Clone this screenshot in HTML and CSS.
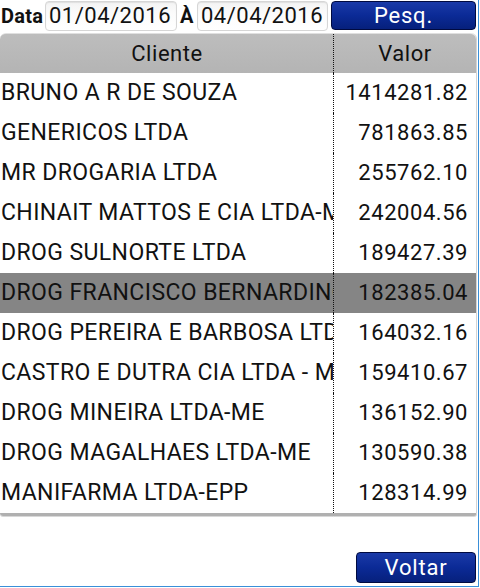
FILE: index.html
```html
<!DOCTYPE html>
<html>
<head>
<meta charset="utf-8">
<link rel="stylesheet" href="styles.css">
</head>
<body>
<div class="screen">
  <div class="toolbar">
    <span class="lbl">Data</span>
    <span class="field f1">01/04/2016</span>
    <span class="lbl a">À</span>
    <span class="field f2">04/04/2016</span>
    <button class="btn pesq">Pesq.</button>
  </div>
  <div class="table">
    <div class="row head">
      <div class="c1">Cliente</div>
      <div class="c2">Valor</div>
    </div>
    <div class="row"><div class="c1">BRUNO A R DE SOUZA</div><div class="c2">1414281.82</div></div>
    <div class="row"><div class="c1">GENERICOS LTDA</div><div class="c2">781863.85</div></div>
    <div class="row"><div class="c1">MR DROGARIA LTDA</div><div class="c2">255762.10</div></div>
    <div class="row"><div class="c1">CHINAIT MATTOS E CIA LTDA-ME</div><div class="c2">242004.56</div></div>
    <div class="row"><div class="c1">DROG SULNORTE LTDA</div><div class="c2">189427.39</div></div>
    <div class="row sel"><div class="c1">DROG FRANCISCO BERNARDINO</div><div class="c2">182385.04</div></div>
    <div class="row"><div class="c1">DROG PEREIRA E BARBOSA LTDA</div><div class="c2">164032.16</div></div>
    <div class="row"><div class="c1">CASTRO E DUTRA CIA LTDA - ME</div><div class="c2">159410.67</div></div>
    <div class="row"><div class="c1">DROG MINEIRA LTDA-ME</div><div class="c2">136152.90</div></div>
    <div class="row"><div class="c1">DROG MAGALHAES LTDA-ME</div><div class="c2">130590.38</div></div>
    <div class="row"><div class="c1">MANIFARMA LTDA-EPP</div><div class="c2">128314.99</div></div>
  </div>
  <div class="footer">
    <button class="btn voltar">Voltar</button>
  </div>
</div>
</body>
</html>
```
FILE: styles.css
```css
html, body {
  margin: 0;
  padding: 0;
  background: #fff;
}
body {
  font-family: Roboto, "Noto Sans", sans-serif;
  color: #111;
}
.screen {
  width: 478px;
  height: 586px;
  border-right: 1px solid #3a8fd8;
  border-bottom: 1px solid #3a8fd8;
  display: flex;
  flex-direction: column;
}
.toolbar {
  height: 33px;
  display: flex;
  align-items: flex-start;
  padding-top: 1px;
  box-sizing: border-box;
}
.lbl {
  font-weight: bold;
  font-size: 20px;
  line-height: 30px;
  padding-left: 1px;
  width: 45px;
  box-sizing: border-box;
  letter-spacing: 0.3px;
}
.lbl.a {
  width: 20px;
  padding-left: 3px;
}
.field {
  height: 30px;
  box-sizing: border-box;
  border: 1px solid #d6d6d6;
  border-radius: 4px;
  background: linear-gradient(#f3f3f3, #fbfbfb 40%, #fff);
  box-shadow: inset 0 1px 1px rgba(0,0,0,0.08);
  font-size: 22px;
  line-height: 28px;
  padding-left: 3px;
  letter-spacing: 0.5px;
  color: #111;
}
.f1 { width: 132px; }
.f2 { width: 131px; }
.btn {
  font-family: Roboto, "Noto Sans", sans-serif;
  color: #fff;
  border: 1px solid #000a40;
  border-radius: 4px;
  background: linear-gradient(#1a3aa8, #0b2a96 50%, #06207c);
  padding: 0;
  font-size: 22px;
  letter-spacing: 0.8px;
}
.pesq {
  width: 145px;
  height: 29px;
  margin-left: 3px;
  line-height: 26px;
}
.table {
  width: 476px;
  border-radius: 6px 6px 3px 3px;
  border-right: 1px solid #d4d4d4;
  border-bottom: 3px solid #b0b0b0;
  box-shadow: 0 1px 0 #d8d8d8;
}
.row {
  display: flex;
  height: 40px;
  font-size: 22px;
  line-height: 40px;
  letter-spacing: 0.55px;
}
.row .c1 {
  width: 334px;
  padding-left: 1px;
  box-sizing: border-box;
  white-space: nowrap;
  overflow: hidden;
  border-right: 1px dotted #111;
  font-size: 23px;
  letter-spacing: 0.4px;
}
.row .c2 {
  flex: 1;
  text-align: right;
  padding-right: 8px;
  white-space: nowrap;
}
.row.head {
  background: linear-gradient(#bdbdbd, #b4b4b4);
  border-radius: 6px 6px 0 0;
  height: 39px;
  line-height: 39px;
  border-top: 1px solid #e0e0e0;
}
.row.head .c1 {
  text-align: center;
  font-size: 22px;
  letter-spacing: 0.55px;
}
.row.head .c2 {
  text-align: center;
  padding-right: 0;
}
.row.sel {
  background: #858585;
}
.footer {
  flex: 1;
  display: flex;
  justify-content: flex-end;
  align-items: flex-end;
  padding-bottom: 3px;
}
.voltar {
  width: 120px;
  height: 31px;
  margin-right: 2px;
  line-height: 28px;
}
```
